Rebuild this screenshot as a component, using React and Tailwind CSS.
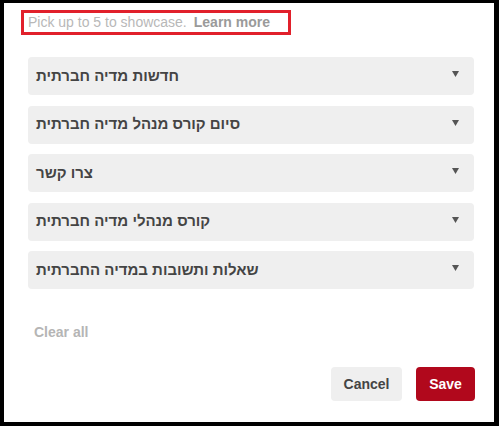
import React from 'react';

const topics = [
  'חדשות מדיה חברתית',
  'סיום קורס מנהל מדיה חברתית',
  'צרו קשר',
  'קורס מנהלי מדיה חברתית',
  'שאלות ותשובות במדיה החברתית',
];

const Caret = () => (
  <svg width="7" height="6" viewBox="0 0 7 6" className="mt-[-4px]">
    <path d="M0 0 H7 L3.5 6 Z" fill="#555" />
  </svg>
);

export default function App() {
  return (
    <div className="h-[426px] w-[499px] bg-black pt-[3px] pl-[4px] pr-[5px] pb-[4px] font-['Liberation_Sans',Arial,sans-serif]">
      <div className="flex h-full flex-col bg-white">
        {/* Intro line, marked with the red frame */}
        <div className="ml-[17px] mt-[7px] flex h-[25px] w-[270px] items-center border-[3px] border-[#e1202b] pl-[4px] text-[14px]">
          <span className="text-[#b8b8b8]">Pick up to 5 to showcase.</span>
          <span className="ml-[7px] font-bold text-[#9a9a9a]">Learn more</span>
        </div>

        <div className="mt-[22px] flex flex-col gap-[10.5px] pl-[24px] pr-[20px]">
          {topics.map((t) => (
            <div
              key={t}
              className="flex h-[38px] items-center justify-between rounded-[4px] bg-[#efefef] pl-[8px] pr-[15px]"
            >
              <span className="text-[15px] font-bold text-[#444]">{t}</span>
              <Caret />
            </div>
          ))}
        </div>

        <div className="mt-[33px] pl-[30px] text-[14px] font-bold text-[#b5b5b5]">Clear all</div>

        <div className="mt-[24px] flex justify-end gap-[14px] pr-[19px]">
          <button className="h-[34px] w-[71px] rounded-[4px] bg-[#efefef] text-[14px] font-bold text-[#444]">
            Cancel
          </button>
          <button className="h-[34px] w-[59px] rounded-[4px] bg-[#b1081c] text-[14px] font-bold text-white">
            Save
          </button>
        </div>
      </div>
    </div>
  );
}
